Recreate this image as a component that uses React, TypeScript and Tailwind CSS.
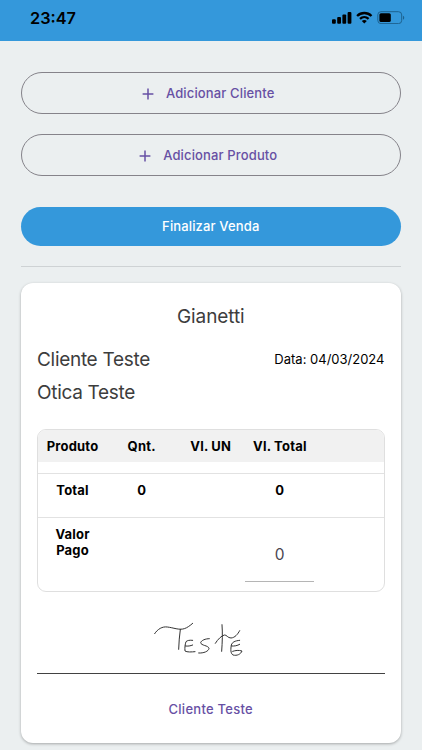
import React from 'react';

type OutlineButtonProps = {
  label: string;
};

type Row = {
  id: number;
  cells: string[];
};

const columns = ['Produto', 'Qnt.', 'Vl. UN', 'Vl. Total', ''];

const rows: Row[] = [{ id: 1, cells: ['Total', '0', '', '0', ''] }];

const StatusBar: React.FC = () => (
  <header className="flex h-[41px] items-start justify-between bg-[#3498db] pl-[30px] pr-[17px] text-black">
    <span className="mt-[6px] text-[16.3px] leading-6 font-semibold">23:47</span>
    <div className="mt-[11px] flex items-center">
      <svg width="20" height="13" viewBox="0 0 20 13" fill="currentColor">
        <rect x="0" y="8.2" width="3.8" height="4.6" rx="1" />
        <rect x="5.2" y="6" width="3.8" height="6.8" rx="1" />
        <rect x="10.4" y="3.4" width="3.8" height="9.4" rx="1" />
        <rect x="15.6" y="1" width="3.8" height="11.8" rx="1" />
      </svg>
      <svg className="ml-1" width="17" height="13" viewBox="0 0 17 13" fill="none" stroke="currentColor" strokeWidth="2.3">
        <path d="M1.1 5C5.2 1 11.4 1 15.5 5" />
        <path d="M4 7.8c2.5-2.3 6.1-2.3 8.6 0" />
        <path d="M8.3 12.6 5.8 10c1.4-1.2 3.6-1.2 5 0z" fill="currentColor" stroke="none" />
      </svg>
      <svg className="ml-1" width="28" height="13" viewBox="0 0 28 13">
        <rect x="0.8" y="0.7" width="23.9" height="11.9" rx="3.2" fill="none" stroke="#1d628f" />
        <rect x="2.4" y="2.2" width="11.4" height="8.8" rx="1.6" fill="black" />
        <path d="M26 4.7c1.7.8 1.7 3.2 0 4z" fill="#1d628f" />
      </svg>
    </div>
  </header>
);

const OutlineButton: React.FC<OutlineButtonProps> = ({ label }) => (
  <button className="flex h-[42px] w-full items-center justify-center rounded-full border border-[#85838a] pt-px pr-[5px] text-[13px] font-medium tracking-[0.14px] text-[#6750a4]">
    <svg className="mr-3" width="12" height="12" viewBox="0 0 12 12" stroke="currentColor" strokeWidth="1.5">
      <path d="M6 .6v10.8M.6 6h10.8" />
    </svg>
    {label}
  </button>
);

// Customer's handwritten signature
const Signature: React.FC = () => (
  <svg
    className="mx-auto block"
    width="110"
    height="60"
    viewBox="0 0 330 180"
    fill="none"
    stroke="#333"
    strokeWidth="3"
    strokeLinecap="round"
    strokeLinejoin="round"
  >
    <path d="M29 71c9-14 23-22 38-20 18 2 35 10 51 5 9-3 17-9 25-16" />
    <path d="M106 58c-3 19-4 39-5 60" />
    <path d="M143 91c-9-1-16 0-20 4-3 8-4 19-3 28 6 4 20 3 30 2M121 108c8 1 15 0 22-3" />
    <path d="M193 86c-12 0-24 5-26 12 1 9 23 8 25 17-1 9-16 15-31 14" />
    <path d="M231 44c2 26 1 52-1 80M211 100c8-13 18-22 27-25 7-1 10 9 20 9 12-1 20-11 26-22" />
    <path d="M284 91c-14 1-23 6-25 14-2 12-3 25 5 30 12 3 23-2 27-12-10-3-19-2-28 1M259 108c9 1 18-1 25-5" />
  </svg>
);

const SalesTable: React.FC = () => (
  <div className="h-[162.5px] overflow-hidden rounded-[9px] border border-[#dfdfdf] text-center text-[13px] leading-4 font-bold tracking-[0.2px] text-black">
    <div className="mb-[10.5px] grid h-8 grid-cols-5 items-center bg-[#f1f1f1]">
      {columns.map((column, index) => (
        <span key={index}>{column}</span>
      ))}
    </div>
    {rows.map((row) => (
      <div key={row.id} className="grid h-11 grid-cols-5 border-t border-[#e2e2e2] pt-2">
        {row.cells.map((cell, index) => (
          <span key={index}>{cell}</span>
        ))}
      </div>
    ))}
    <div className="grid grid-cols-5 border-t border-[#e2e2e2] pt-2">
      <span className="px-3">Valor Pago</span>
      <span />
      <span />
      <div className="h-[56px] border-b border-[#b5b5b5] pt-[17px] text-[15.5px] leading-6 font-normal text-[#49454f]">0</div>
      <span />
    </div>
  </div>
);

const App: React.FC = () => {
  return (
    <div className="h-[750px] w-[422px] overflow-hidden bg-[#ebeff0] font-['Inter',sans-serif]">
      <StatusBar />
      <main className="pr-[21px] pl-[20.5px] pt-[31px]">
        <div className="space-y-5">
          <OutlineButton label="Adicionar Cliente" />
          <OutlineButton label="Adicionar Produto" />
        </div>
        <button className="mt-[30.5px] h-[39.5px] w-full rounded-full bg-[#3498db] pt-px text-[13px] font-medium tracking-[0.14px] text-white">
          Finalizar Venda
        </button>
        <hr className="mt-5 border-[#ced2d4]" />

        <section className="mt-4 h-[460px] rounded-xl bg-white px-[16.5px] pt-[21px] shadow-[0_1px_3px_rgba(0,0,0,0.3)]">
          <h1 className="text-center text-[19px] leading-[26px] tracking-[-0.1px] text-[#3d3d3d]">Gianetti</h1>
          <div className="mt-[17px] flex items-center justify-between">
            <h2 className="text-[19px] leading-[26px] tracking-[-0.3px] text-[#3d3d3d]">Cliente Teste</h2>
            <span className="-mt-px text-[13px] text-black">Data: 04/03/2024</span>
          </div>
          <h2 className="mt-[7px] mb-[23px] text-[19px] leading-[26px] tracking-[-0.3px] text-[#3d3d3d]">Otica Teste</h2>
          <SalesTable />
          <div className="border-b border-[#424242] pt-[18.5px] pr-[22px] pb-[3px]">
            <Signature />
          </div>
          <p className="mt-[25px] text-center text-[13px] leading-5 font-medium tracking-[0.27px] text-[#6750a4]">
            Cliente Teste
          </p>
        </section>
      </main>
    </div>
  );
};

export default App;
